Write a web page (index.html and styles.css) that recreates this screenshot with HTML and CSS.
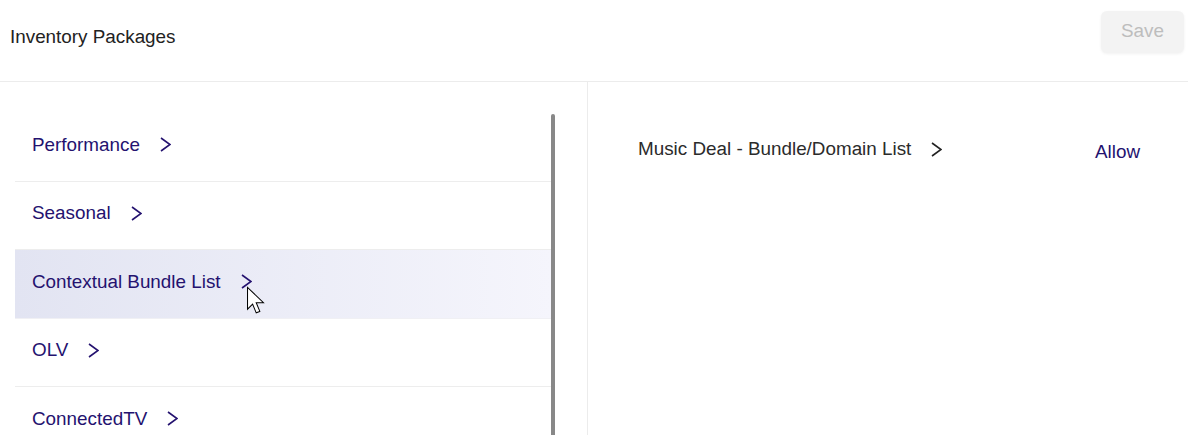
FILE: index.html
```html
<!DOCTYPE html>
<html>
<head>
<meta charset="utf-8">
<link rel="stylesheet" href="styles.css">
</head>
<body>
<div class="page">
  <header class="header">
    <div class="title">Inventory Packages</div>
    <button class="save" disabled>Save</button>
  </header>
  <div class="body">
    <div class="left">
      <div class="list">
        <div class="row"><span class="label">Performance</span><svg class="chev" viewBox="0 0 11 15"><path d="M1 1 L10 7.5 L1 14" /></svg></div>
        <div class="row"><span class="label">Seasonal</span><svg class="chev" viewBox="0 0 11 15"><path d="M1 1 L10 7.5 L1 14" /></svg></div>
        <div class="row active"><span class="label">Contextual Bundle List</span><svg class="chev" viewBox="0 0 11 15"><path d="M1 1 L10 7.5 L1 14" /></svg>
          <svg class="cursor" viewBox="0 0 13 20"><path d="M1 1 L1 16 L4.5 12.5 L7 18.5 L9.5 17.5 L7 11.5 L12 11.5 Z" /></svg>
        </div>
        <div class="row"><span class="label">OLV</span><svg class="chev" viewBox="0 0 11 15"><path d="M1 1 L10 7.5 L1 14" /></svg></div>
        <div class="row last"><span class="label">ConnectedTV</span><svg class="chev" viewBox="0 0 11 15"><path d="M1 1 L10 7.5 L1 14" /></svg></div>
      </div>
      <div class="scrollbar"></div>
    </div>
    <div class="right">
      <div class="item">
        <span class="item-label">Music Deal - Bundle/Domain List</span>
        <svg class="chev dark" viewBox="0 0 11 15"><path d="M1 1 L10 7.5 L1 14" /></svg>
        <span class="allow">Allow</span>
      </div>
    </div>
  </div>
</div>
</body>
</html>
```
FILE: styles.css
```css
* { box-sizing: border-box; }
html, body { margin: 0; padding: 0; background: #fff; }
body { font-family: Arial, "Liberation Sans", sans-serif; overflow: hidden; }
.page { width: 1188px; height: 435px; display: flex; flex-direction: column; }
.header {
  height: 82px;
  border-bottom: 1px solid #ececec;
  display: flex;
  align-items: flex-start;
  justify-content: space-between;
  padding: 0 4px 0 10px;
  flex-shrink: 0;
}
.title { font-size: 18.85px; color: #222; margin-top: 27px; line-height: 20px; }
.save {
  margin-top: 11px;
  width: 83px;
  height: 42px;
  border: none;
  border-radius: 6px;
  background: #f3f3f3;
  color: #bdbdbd;
  font-family: Arial, "Liberation Sans", sans-serif;
  font-size: 18.85px;
  box-shadow: 0 1px 3px rgba(0,0,0,0.06);
  padding: 0 0 2px;
}
.body { flex: 1; display: flex; min-height: 0; }
.left {
  width: 588px;
  border-right: 1px solid #ececec;
  padding: 31px 32px 0 15px;
  display: flex;
  position: relative;
  overflow: hidden;
}
.list { width: 537px; flex-shrink: 0; }
.row {
  height: 68.5px;
  display: flex;
  align-items: center;
  padding-left: 17px;
  padding-bottom: 4px;
  border-bottom: 1px solid #ededed;
  position: relative;
  color: #24126f;
  font-size: 18.85px;
}
.row.active { background: linear-gradient(90deg, #e2e4f2 0%, #f5f5fc 100%); border-bottom-color: #f0f0f4; }
.label { line-height: 20px; }
.chev { width: 11px; height: 15px; margin-left: 20px; fill: none; stroke: #24126f; stroke-width: 1.6; }
.chev.dark { stroke: #222; margin-left: 20px; }
.cursor {
  position: absolute;
  left: 231px;
  top: 36px;
  width: 19px;
  height: 29px;
  fill: #fff;
  stroke: #000;
  stroke-width: 0.7;
}
.scrollbar {
  position: absolute;
  left: 551px;
  top: 32px;
  width: 4px;
  bottom: 0;
  background: #888;
  border-radius: 2px 2px 0 0;
}
.right { flex: 1; padding: 57px 48px 0 50px; }
.item { display: flex; align-items: center; height: 20px; }
.item-label { font-size: 18.85px; color: #2b2b2b; line-height: 20px; }
.allow { margin-left: auto; font-size: 18.85px; color: #24126f; margin-top: 6px; }
```
